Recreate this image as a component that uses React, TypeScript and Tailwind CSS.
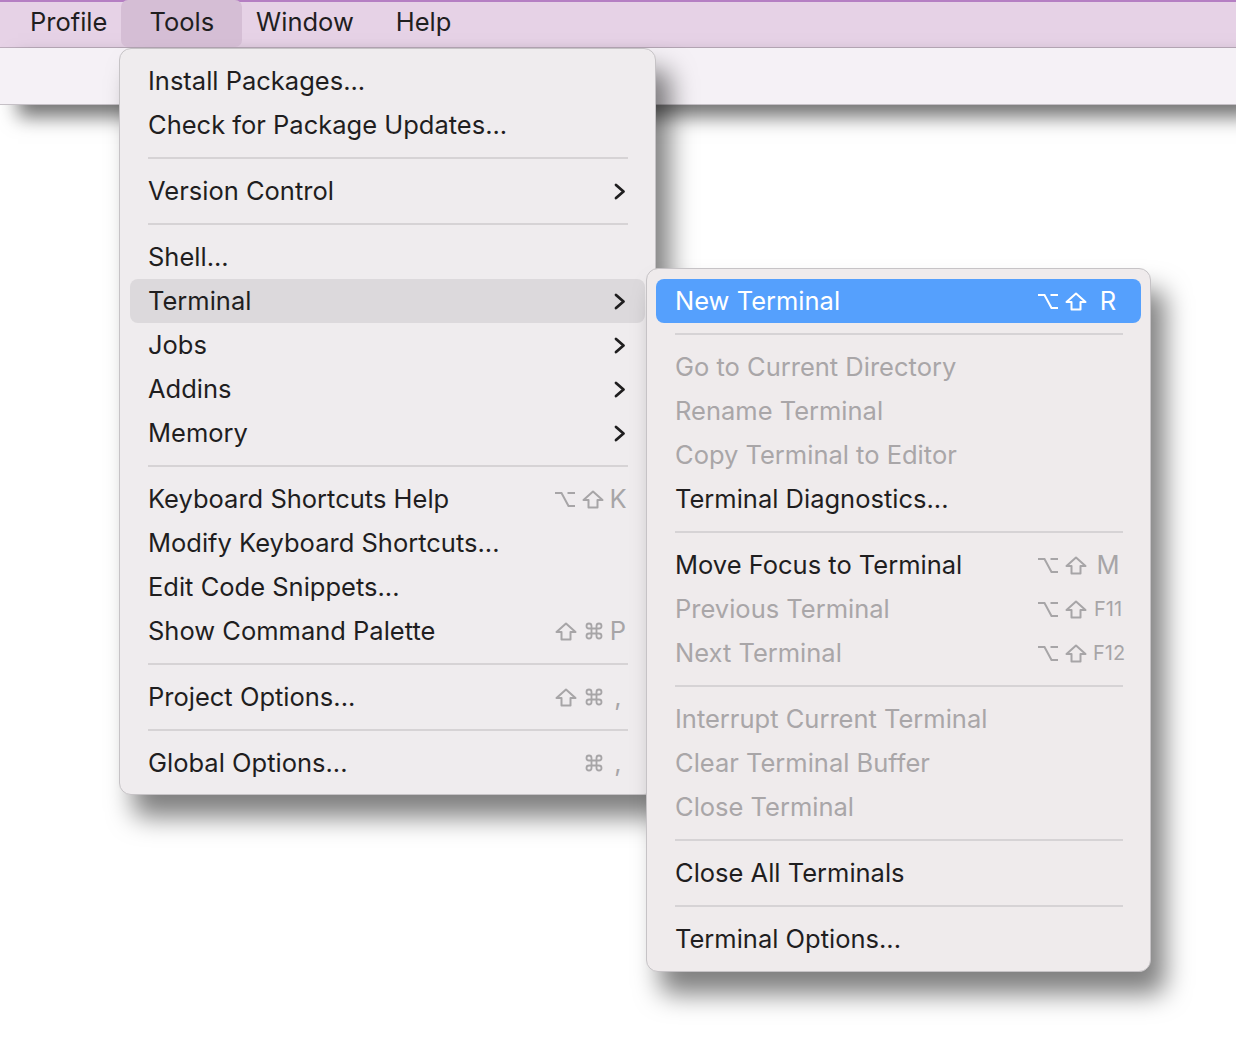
import React from "react";

type Mod = "opt" | "shift" | "cmd";

const OptIcon = () => (
  <svg width="20" height="17" viewBox="0 0 20 17" fill="none" stroke="currentColor" strokeWidth="2">
    <path d="M0 2h6.5l7 13H20M12.5 2H20" />
  </svg>
);

const ShiftIcon = () => (
  <svg width="22" height="19" viewBox="0 0 22 19" fill="none" stroke="currentColor" strokeWidth="2" strokeLinejoin="round">
    <path d="M11 1.5L20.5 10H15.5V17.5H6.5V10H1.5Z" />
  </svg>
);

const CmdIcon = () => (
  <svg width="20" height="20" viewBox="0 0 24 24" fill="none" stroke="currentColor" strokeWidth="2.2" strokeLinecap="round" strokeLinejoin="round">
    <path d="M15 6v12a3 3 0 1 0 3-3H6a3 3 0 1 0 3 3V6a3 3 0 1 0-3 3h12a3 3 0 1 0-3-3" />
  </svg>
);

const Chevron = () => (
  <svg width="12" height="17" viewBox="0 0 12 17" fill="none" stroke="currentColor" strokeWidth="2.8" strokeLinecap="round" strokeLinejoin="round">
    <path d="M2 2l7.5 6.5L2 15" />
  </svg>
);

function Shortcut({
  mods,
  k,
  small,
  colW,
  gapAfter,
}: {
  mods: Mod[];
  k: string;
  small?: boolean;
  colW: string;
  gapAfter: string;
}) {
  return (
    <div className="flex items-center">
      <div className={`flex items-center gap-[7px] ${gapAfter}`}>
        {mods.map((m, i) =>
          m === "opt" ? <OptIcon key={i} /> : m === "shift" ? <ShiftIcon key={i} /> : <CmdIcon key={i} />
        )}
      </div>
      <div className={`${colW} text-center ${small ? "text-[20px]" : "text-[25.5px]"}`}>{k}</div>
    </div>
  );
}

type Item =
  | { sep: true }
  | {
      sep?: false;
      label: string;
      disabled?: boolean;
      sub?: boolean;
      active?: "gray" | "blue";
      sc?: { mods: Mod[]; k: string; small?: boolean };
    };

const mainItems: Item[] = [
  { label: "Install Packages..." },
  { label: "Check for Package Updates..." },
  { sep: true },
  { label: "Version Control", sub: true },
  { sep: true },
  { label: "Shell..." },
  { label: "Terminal", sub: true, active: "gray" },
  { label: "Jobs", sub: true },
  { label: "Addins", sub: true },
  { label: "Memory", sub: true },
  { sep: true },
  { label: "Keyboard Shortcuts Help", sc: { mods: ["opt", "shift"], k: "K" } },
  { label: "Modify Keyboard Shortcuts..." },
  { label: "Edit Code Snippets..." },
  { label: "Show Command Palette", sc: { mods: ["shift", "cmd"], k: "P" } },
  { sep: true },
  { label: "Project Options...", sc: { mods: ["shift", "cmd"], k: "," } },
  { sep: true },
  { label: "Global Options...", sc: { mods: ["cmd"], k: "," } },
];

const subItems: Item[] = [
  { label: "New Terminal", active: "blue", sc: { mods: ["opt", "shift"], k: "R" } },
  { sep: true },
  { label: "Go to Current Directory", disabled: true },
  { label: "Rename Terminal", disabled: true },
  { label: "Copy Terminal to Editor", disabled: true },
  { label: "Terminal Diagnostics..." },
  { sep: true },
  { label: "Move Focus to Terminal", sc: { mods: ["opt", "shift"], k: "M" } },
  { label: "Previous Terminal", disabled: true, sc: { mods: ["opt", "shift"], k: "F11", small: true } },
  { label: "Next Terminal", disabled: true, sc: { mods: ["opt", "shift"], k: "F12", small: true } },
  { sep: true },
  { label: "Interrupt Current Terminal", disabled: true },
  { label: "Clear Terminal Buffer", disabled: true },
  { label: "Close Terminal", disabled: true },
  { sep: true },
  { label: "Close All Terminals" },
  { sep: true },
  { label: "Terminal Options..." },
];

function MenuRows({
  items,
  textPad,
  rightPad,
  sepClass,
  colW,
  gapAfter,
}: {
  items: Item[];
  textPad: string;
  rightPad: string;
  sepClass: string;
  colW: string;
  gapAfter: string;
}) {
  return (
    <>
      {items.map((it, i) => {
        if (it.sep) {
          return (
            <div key={i} className="h-[22px] flex items-center">
              <div className={`h-[2px] bg-[#d6d3d5] flex-1 ${sepClass}`} />
            </div>
          );
        }
        const bg =
          it.active === "gray" ? "bg-[#dcd9dc]" : it.active === "blue" ? "bg-[#55a0fd]" : "";
        const color =
          it.active === "blue" ? "text-white" : it.disabled ? "text-[#a9a6a8]" : "text-[#1f1e1f]";
        const scColor = it.active === "blue" ? "text-white" : "text-[#a7a5a7]";
        return (
          <div
            key={i}
            className={`h-[44px] flex items-center justify-between rounded-[8px] ${bg} ${textPad} ${rightPad}`}
          >
            <span className={`text-[25.5px] leading-none whitespace-nowrap ${color}`}>{it.label}</span>
            {it.sub && (
              <span className="text-[#1f1e1f] mr-[2px] flex items-center">
                <Chevron />
              </span>
            )}
            {it.sc && (
              <span className={scColor}>
                <Shortcut mods={it.sc.mods} k={it.sc.k} small={it.sc.small} colW={colW} gapAfter={gapAfter} />
              </span>
            )}
          </div>
        );
      })}
    </>
  );
}

export default function App() {
  return (
    <div
      className="relative w-[1236px] h-[1046px] overflow-hidden bg-white"
      style={{ fontFamily: "Inter, 'Noto Sans', sans-serif" }}
    >
      {/* menu bar */}
      <div className="h-[48px] bg-[#e6d2e6] border-t-2 border-[#b57fc3] border-b border-b-[#bcadbc] flex items-stretch pl-[9px] text-[25.5px] text-[#1f1e1f]">
        <div className="px-[21px] pb-[4px] flex items-center">Profile</div>
        <div className="relative px-[21px] pb-[4px] flex items-center">
          <div className="absolute -top-[2px] bottom-0 -left-[7px] -right-[7px] bg-[#d5bed5] rounded-[7px]" />
          <span className="relative">Tools</span>
        </div>
        <div className="px-[21px] pb-[4px] flex items-center">Window</div>
        <div className="px-[21px] pb-[4px] flex items-center">Help</div>
      </div>
      {/* background window strip */}
      <div className="h-[57px] bg-[#f5f1f6] border-b border-[#c5c0c6] shadow-[18px_12px_18px_rgba(0,0,0,0.55)]" />

      {/* main menu */}
      <div className="absolute left-[119px] top-[48px] w-[537px] h-[747px] rounded-[12px] bg-[#efecee] border border-[#c6c3c6] pt-[10px] px-[10px] shadow-[14px_22px_26px_rgba(0,0,0,0.5)]">
        <MenuRows
          items={mainItems}
          textPad="pl-[18px]"
          rightPad="pr-[17px]"
          sepClass="mx-[18px] mr-[17px]"
          colW="w-[20px]"
          gapAfter="mr-[4px]"
        />
      </div>

      {/* submenu */}
      <div className="absolute left-[646px] top-[268px] w-[505px] h-[704px] rounded-[12px] bg-[#efebec] border border-[#c6c3c6] pt-[10px] px-[9px] shadow-[14px_22px_26px_rgba(0,0,0,0.5)]">
        <MenuRows
          items={subItems}
          textPad="pl-[19px]"
          rightPad="pr-[18px]"
          sepClass="mx-[19px] mr-[18px]"
          colW="w-[30px]"
          gapAfter="mr-[6px]"
        />
      </div>
    </div>
  );
}
